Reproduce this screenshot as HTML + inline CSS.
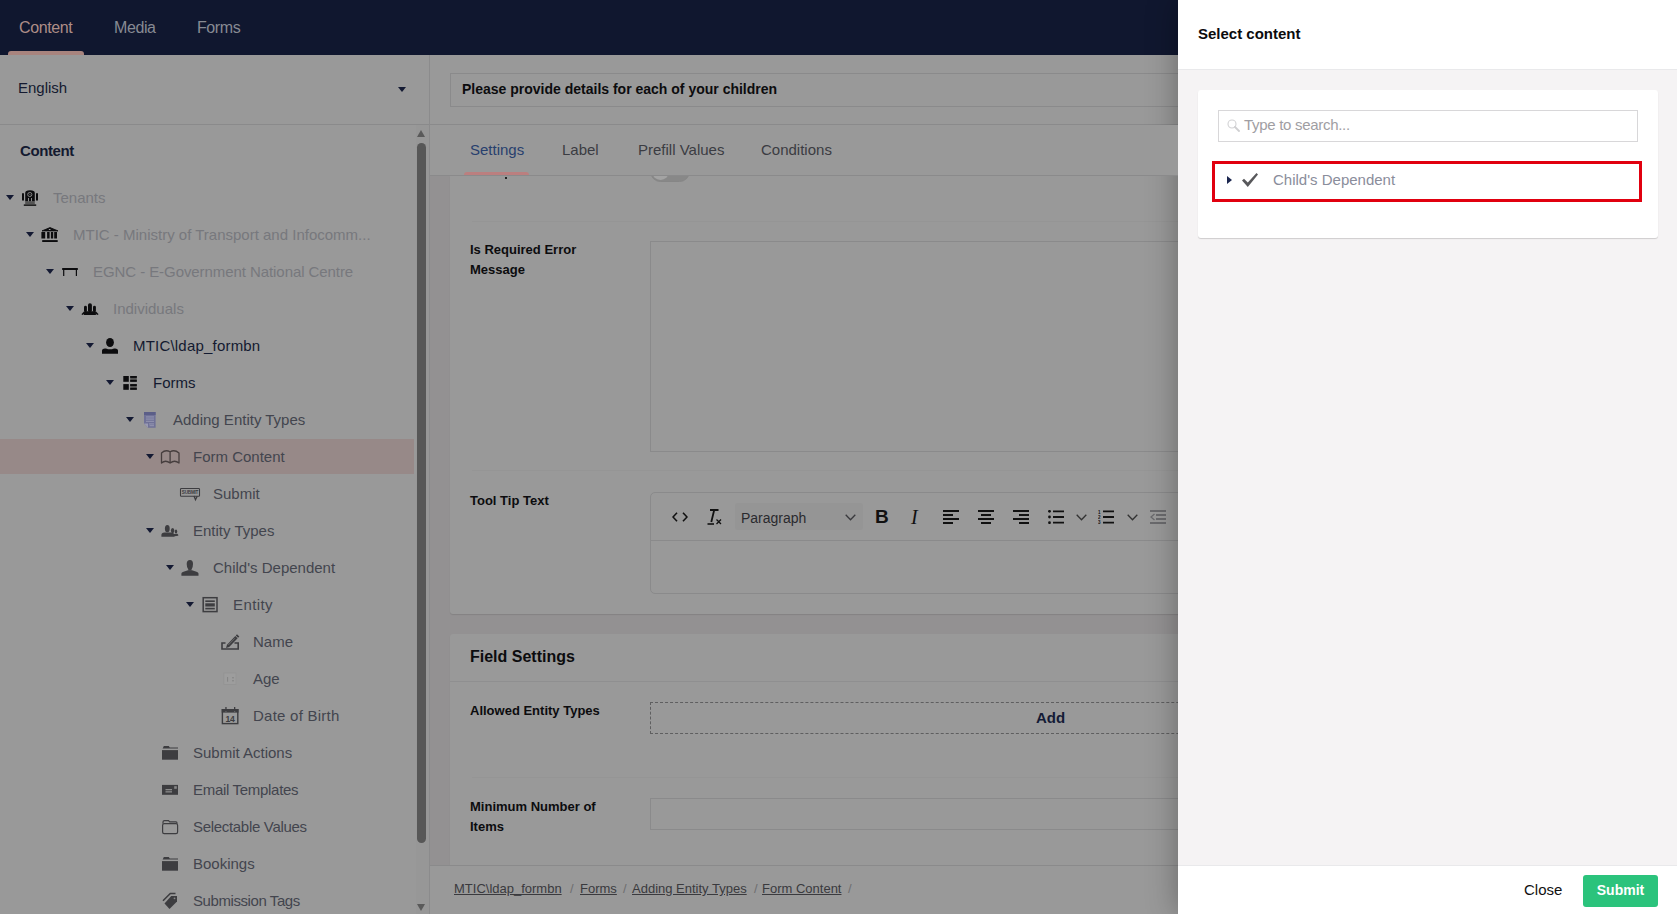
<!DOCTYPE html>
<html><head><meta charset="utf-8">
<style>
*{box-sizing:border-box;margin:0;padding:0}
html,body{width:1677px;height:914px;overflow:hidden;background:#939192;font-family:"Liberation Sans",sans-serif;}
.abs{position:absolute}
#hdr{left:0;top:0;width:1677px;height:55px;background:#10172f}
.sec{position:absolute;top:19px;font-size:16px;letter-spacing:-0.4px;color:#878a93;line-height:18px}
#left{left:0;top:55px;width:430px;height:859px;background:#999999;border-right:1px solid #8b8b8c}
.tt{position:absolute;font-size:15px;line-height:18px;white-space:nowrap}
.car{position:absolute;width:0;height:0;border-left:4px solid transparent;border-right:4px solid transparent;border-top:5px solid #141a33}
.gray{color:#77787d}
.dark{color:#131a30}
.mid{color:#43454e}
#main{left:430px;top:55px;width:748px;height:859px;background:#939192;overflow:hidden}
.lbl{position:absolute;font-size:13px;font-weight:bold;color:#0c0c0e;line-height:20px;white-space:nowrap}
.box{position:absolute;background:#999999;border-radius:3px;box-shadow:0 1px 1px rgba(0,0,0,0.1)}
.sep{position:absolute;height:1px;background:#959595}
.inp{position:absolute;border:1px solid #8a8a8b}
.tab{position:absolute;z-index:3;top:86px;font-size:15px;line-height:18px;color:#3b3c42}
.bc{position:absolute;top:826px;font-size:13px;line-height:16px;color:#3a3a3e;text-decoration:underline;white-space:nowrap}
.bcs{position:absolute;top:826px;font-size:13px;line-height:16px;color:#6e6e70}
#panel{left:1178px;top:0;width:499px;height:914px;background:#f5f3f4;box-shadow:0 0 30px rgba(0,0,0,0.32)}

</style></head>
<body>
<div id="hdr" class="abs">
  <div class="sec" style="left:19px;color:#ad8d87">Content</div>
  <div class="abs" style="left:8px;top:51px;width:76px;height:4px;background:#a8847e;border-radius:3px 3px 0 0"></div>
  <div class="sec" style="left:114px">Media</div>
  <div class="sec" style="left:197px">Forms</div>
</div>

<div id="left" class="abs">
  <div class="abs" style="left:0;top:0;width:429px;height:70px;border-bottom:1px solid #8a8a8b"></div>
  <div class="abs" style="left:18px;top:24px;font-size:15px;line-height:18px;color:#141a30">English</div>
  <div class="car" style="left:398px;top:32px"></div>
  <div class="abs" style="left:20px;top:87px;font-size:15px;letter-spacing:-0.4px;font-weight:bold;line-height:18px;color:#141a30">Content</div>
<div class="car" style="left:6px;top:140.0px"></div>
<svg class="abs" style="left:22px;top:134px;width:16px;height:18px;color:#0c0c0e;overflow:visible" viewBox="0 0 16 18"><rect x="0" y="4" width="2" height="7.7" rx="1" fill="currentColor"/><rect x="14" y="4" width="2" height="7.7" rx="1" fill="currentColor"/>
<path d="M3.2 12.5 V4 Q3.2 1.2 8 1.2 Q12.8 1.2 12.8 4 V12.5 Z" fill="currentColor"/>
<circle cx="7.8" cy="5.5" r="2.1" fill="none" stroke="#aaa" stroke-width="0.7"/><path d="M7 4.6 L8.8 6.4" stroke="#aaa" stroke-width=".6"/>
<rect x="6.2" y="9" width="0.8" height="3.5" fill="#aaa"/><rect x="9.2" y="9" width="0.8" height="3.5" fill="#aaa"/>
<rect x="3.2" y="12.5" width="9.6" height="2.7" fill="#555"/><rect x="1.8" y="15.3" width="12.4" height="1.7" fill="#222"/></svg>
<div class="tt gray" style="left:53px;top:133.5px">Tenants</div>
<div class="car" style="left:26px;top:177.0px"></div>
<svg class="abs" style="left:42px;top:171px;width:16px;height:18px;color:#0c0c0e;overflow:visible" viewBox="0 0 16 18"><path d="M0 4.9 L8 1.6 L16 4.9 Z" fill="currentColor" stroke="currentColor" stroke-width="0.9" stroke-linejoin="round"/><ellipse cx="7.7" cy="3.6" rx="1" ry="0.5" fill="#aaa"/>
<rect x="-0.6" y="6" width="3.8" height="6.5" fill="currentColor"/><rect x="5.1" y="6" width="2.5" height="6.5" fill="currentColor"/><rect x="8.9" y="6" width="2.3" height="6.5" fill="currentColor"/><rect x="12.2" y="6" width="2.8" height="6.5" fill="currentColor"/>
<rect x="0.2" y="14.1" width="15.5" height="1.9" fill="currentColor"/></svg>
<div class="tt gray" style="left:73px;top:170.5px">MTIC - Ministry of Transport and Infocomm...</div>
<div class="car" style="left:46px;top:214.0px"></div>
<svg class="abs" style="left:62px;top:208px;width:16px;height:18px;color:#0c0c0e;overflow:visible" viewBox="0 0 16 18"><rect x="0" y="5" width="16" height="2" rx="0.8" fill="currentColor"/><rect x="1.1" y="6.5" width="1.2" height="6.5" fill="currentColor"/><rect x="13.8" y="6.5" width="1.2" height="6.5" fill="currentColor"/></svg>
<div class="tt gray" style="left:93px;top:207.5px;letter-spacing:-0.07px">EGNC - E-Government National Centre</div>
<div class="car" style="left:66px;top:251.0px"></div>
<svg class="abs" style="left:82px;top:245px;width:16px;height:18px;color:#0c0c0e;overflow:visible" viewBox="0 0 16 18"><rect x="6" y="3.2" width="3.9" height="9" rx="1.9" fill="currentColor"/><rect x="2" y="5.7" width="2.9" height="6.5" rx="1.45" fill="currentColor"/><rect x="11" y="5.7" width="2.9" height="6.5" rx="1.45" fill="currentColor"/>
<path d="M2 15 V12.5 Q2 11.2 4.5 11.2 H11.5 Q13.9 11.2 13.9 12.5 V15 Z" fill="currentColor"/>
<path d="M-0.6 14.2 L2.2 11.3 L3 12.8 L0.9 15 Z" fill="currentColor"/><path d="M16.6 14.2 L13.8 11.3 L13 12.8 L15.1 15 Z" fill="currentColor"/></svg>
<div class="tt gray" style="left:113px;top:244.5px">Individuals</div>
<div class="car" style="left:86px;top:288.0px"></div>
<svg class="abs" style="left:102px;top:282px;width:16px;height:18px;color:#0c0c0e;overflow:visible" viewBox="0 0 16 18"><ellipse cx="8" cy="5.5" rx="3.9" ry="4.5" fill="currentColor"/><path d="M0 16.7 V13.8 Q0 11.8 3 11.6 Q5 11.5 6 12.2 H10 Q11 11.5 13 11.6 Q16 11.8 16 13.8 V16.7 Z" fill="currentColor"/></svg>
<div class="tt dark" style="left:133px;top:281.5px;letter-spacing:0.2px">MTIC\ldap_formbn</div>
<div class="car" style="left:106px;top:325.0px"></div>
<svg class="abs" style="left:122px;top:319px;width:16px;height:18px;color:#0c0c0e;overflow:visible" viewBox="0 0 16 18"><rect x="1.3" y="2" width="5.5" height="5.8" fill="currentColor"/><rect x="1.3" y="10.1" width="5.5" height="5.7" fill="currentColor"/>
<rect x="8.2" y="2" width="6.6" height="5.8" fill="#555"/><rect x="8.2" y="2" width="6.6" height="1.9" fill="currentColor"/><rect x="8.2" y="5.9" width="6.6" height="1.9" fill="currentColor"/>
<rect x="8.2" y="10.1" width="6.6" height="5.7" fill="#555"/><rect x="8.2" y="10.1" width="6.6" height="1.9" fill="currentColor"/><rect x="8.2" y="13.9" width="6.6" height="1.9" fill="currentColor"/></svg>
<div class="tt dark" style="left:153px;top:318.5px">Forms</div>
<div class="car" style="left:126px;top:362.0px"></div>
<svg class="abs" style="left:142px;top:356px;width:16px;height:18px;color:#6a6d95;overflow:visible" viewBox="0 0 16 18"><path d="M2 1 H13.6 V16.7 H6 L2 12.5 Z" fill="#6f7197"/><rect x="2" y="1" width="11.6" height="3" fill="#5b5e88"/><rect x="4" y="5.5" width="8" height="0.9" fill="#9c9db6"/><rect x="4" y="7.6" width="8" height="0.9" fill="#9c9db6"/><rect x="4" y="9.8" width="8" height="0.9" fill="#9c9db6"/><rect x="7" y="12.5" width="5" height="0.9" fill="#9c9db6"/><rect x="7.5" y="14.3" width="4.5" height="0.9" fill="#9c9db6"/><path d="M2 12.5 L6 16.7 V12.5 Z" fill="#9a9bb3"/></svg>
<div class="tt mid" style="left:173px;top:355.5px">Adding Entity Types</div>
<div class="abs" style="left:0;top:384px;width:414px;height:35px;background:#978988"></div>
<div class="car" style="left:146px;top:399.0px"></div>
<svg class="abs" style="left:162px;top:393px;width:16px;height:18px;color:#463e3e;overflow:visible" viewBox="0 0 16 18"><path d="M-0.5 5 Q3.5 1.2 8.1 3.8 Q12.6 1.2 17 5 V15 Q12.6 11.5 8.1 15 Q3.5 11.5 -0.5 15 Z M8.1 3.8 V15" fill="none" stroke="currentColor" stroke-width="1.3" stroke-linejoin="round"/></svg>
<div class="tt mid" style="left:193px;top:392.5px">Form Content</div>
<svg class="abs" style="left:182px;top:430px;width:16px;height:18px;color:#3d3d40;overflow:visible" viewBox="0 0 16 18"><rect x="-1.5" y="3.5" width="19" height="7.8" rx="0.8" fill="none" stroke="currentColor" stroke-width="1.1"/><text x="8" y="9.3" font-size="4.6" text-anchor="middle" font-family="Liberation Sans" font-weight="bold" fill="currentColor" letter-spacing="-0.2">SUBMIT</text><path d="M12 11 L13.5 14.7 L15.2 11.3" fill="none" stroke="currentColor" stroke-width="1.3"/></svg>
<div class="tt mid" style="left:213px;top:429.5px">Submit</div>
<div class="car" style="left:146px;top:473.0px"></div>
<svg class="abs" style="left:162px;top:467px;width:16px;height:18px;color:#3d3d40;overflow:visible" viewBox="0 0 16 18"><ellipse cx="5.3" cy="6.7" rx="2.4" ry="3.6" fill="currentColor"/><ellipse cx="10.6" cy="8.6" rx="1.7" ry="2.6" fill="currentColor"/><ellipse cx="14" cy="9.5" rx="1.2" ry="1.9" fill="currentColor"/>
<path d="M-0.6 14.8 V13 Q-0.6 11 2.5 10.6 H9 Q11.5 10.8 12.3 12 L15.2 11.8 Q16.5 12.5 16.3 13.8 L12.5 14.3 V14.8 Z" fill="currentColor"/></svg>
<div class="tt mid" style="left:193px;top:466.5px">Entity Types</div>
<div class="car" style="left:166px;top:510.0px"></div>
<svg class="abs" style="left:182px;top:504px;width:16px;height:18px;color:#3d3d40;overflow:visible" viewBox="0 0 16 18"><path d="M4.7 5 Q4.7 1 8 1 Q11 1 11 5 Q11 8.5 9.5 10.5 V11.5 H6.3 V10.5 Q4.7 8.5 4.7 5 Z" fill="currentColor"/><path d="M-0.6 16.8 V14.5 Q-0.6 13.5 1.5 12.8 L6 11.3 H10 L14.5 12.8 Q16.5 13.5 16.5 14.5 V16.8 Z" fill="currentColor"/></svg>
<div class="tt mid" style="left:213px;top:503.5px">Child's Dependent</div>
<div class="car" style="left:186px;top:547.0px"></div>
<svg class="abs" style="left:202px;top:541px;width:16px;height:18px;color:#3d3d40;overflow:visible" viewBox="0 0 16 18"><rect x="1.2" y="1.7" width="13.8" height="13.9" fill="none" stroke="currentColor" stroke-width="1.5"/><rect x="3.3" y="4.4" width="9.5" height="1.6" fill="currentColor"/><rect x="3.3" y="7.3" width="9.5" height="3.2" fill="currentColor"/><rect x="3.3" y="11.8" width="9.5" height="1.6" fill="currentColor"/></svg>
<div class="tt mid" style="left:233px;top:540.5px;letter-spacing:0.4px">Entity</div>
<svg class="abs" style="left:222px;top:578px;width:16px;height:18px;color:#3d3d40;overflow:visible" viewBox="0 0 16 18"><path d="M3.5 10 H0 V16 H16.2 V10 H12.5" fill="none" stroke="currentColor" stroke-width="1.6"/><path d="M4 15 L5 11.8 L13.3 3 L15.6 5.2 L7.2 14 Z" fill="currentColor"/><path d="M13.8 2.5 L15 1.3 L17.3 3.5 L16.1 4.7 Z" fill="currentColor"/><path d="M6.3 12 L12.8 5.3" stroke="#888" stroke-width=".6"/></svg>
<div class="tt mid" style="left:253px;top:577.5px">Name</div>
<svg class="abs" style="left:222px;top:615px;width:16px;height:18px;color:#3d3d40;overflow:visible" viewBox="0 0 16 18"><rect x="1.8" y="3" width="12.2" height="11.4" fill="#9d9d9d" stroke="#939393" stroke-width="0.8"/><rect x="5.3" y="7" width="0.8" height="4.7" fill="#7c7c7c"/><circle cx="11" cy="7.8" r="0.8" fill="#808080"/><circle cx="11" cy="10.8" r="0.8" fill="#808080"/></svg>
<div class="tt mid" style="left:253px;top:614.5px">Age</div>
<svg class="abs" style="left:222px;top:652px;width:16px;height:18px;color:#3d3d40;overflow:visible" viewBox="0 0 16 18"><rect x="0.4" y="2.7" width="15.4" height="13.9" fill="none" stroke="currentColor" stroke-width="1.4"/><rect x="-0.3" y="2" width="16.8" height="3.6" fill="currentColor"/><rect x="3.3" y="0" width="1.3" height="4.5" fill="currentColor"/><rect x="12" y="0" width="1.3" height="4.5" fill="currentColor"/><path d="M3.3 4.5 H4.6 M12 4.5 H13.3" stroke="#888" stroke-width=".5"/><text x="8" y="15.2" font-size="8.6" text-anchor="middle" font-family="Liberation Sans" font-weight="bold" fill="currentColor" letter-spacing="-0.3">14</text></svg>
<div class="tt mid" style="left:253px;top:651.5px;letter-spacing:0.25px">Date of Birth</div>
<svg class="abs" style="left:162px;top:689px;width:16px;height:18px;color:#3d3d40;overflow:visible" viewBox="0 0 16 18"><path d="M0.5 5 L1.8 2 H6.8 L7.8 3.5 H16 V4.5 H0.5 Z" fill="currentColor"/><rect x="0" y="6.1" width="16" height="9.6" fill="currentColor"/></svg>
<div class="tt mid" style="left:193px;top:688.5px">Submit Actions</div>
<svg class="abs" style="left:162px;top:726px;width:16px;height:18px;color:#3d3d40;overflow:visible" viewBox="0 0 16 18"><rect x="0" y="3.9" width="16" height="9.9" fill="currentColor"/><rect x="3.5" y="8" width="6.5" height="1.3" fill="#999" opacity=".85"/><rect x="3.5" y="10.2" width="6.5" height="1.3" fill="#999" opacity=".85"/><rect x="12.2" y="5.2" width="2.6" height="2.6" fill="#888"/></svg>
<div class="tt mid" style="left:193px;top:725.5px;letter-spacing:-0.3px">Email Templates</div>
<svg class="abs" style="left:162px;top:763px;width:16px;height:18px;color:#3d3d40;overflow:visible" viewBox="0 0 16 18"><path d="M1 5.5 V4 Q1 2.6 2.5 2.6 H6.5 L7.7 3.8 H14 Q15 3.8 15 5 V5.5" fill="none" stroke="currentColor" stroke-width="1.2"/><rect x="0.6" y="5.6" width="15" height="10" rx="1.6" fill="none" stroke="currentColor" stroke-width="1.2"/></svg>
<div class="tt mid" style="left:193px;top:762.5px;letter-spacing:-0.31px">Selectable Values</div>
<svg class="abs" style="left:162px;top:800px;width:16px;height:18px;color:#3d3d40;overflow:visible" viewBox="0 0 16 18"><path d="M0.5 5 L1.8 2 H6.8 L7.8 3.5 H16 V4.5 H0.5 Z" fill="currentColor"/><rect x="0" y="6.1" width="16" height="9.6" fill="currentColor"/></svg>
<div class="tt mid" style="left:193px;top:799.5px">Bookings</div>
<svg class="abs" style="left:162px;top:837px;width:16px;height:18px;color:#3d3d40;overflow:visible" viewBox="0 0 16 18"><path d="M1 8.7 L8.3 1.5 H13.5" fill="none" stroke="currentColor" stroke-width="1.6"/><path d="M2.5 11.6 L9.2 4 H15 V9.5 L7.5 17 Z" fill="currentColor"/><circle cx="12.5" cy="6.3" r="0.9" fill="#888"/></svg>
<div class="tt mid" style="left:193px;top:836.5px;letter-spacing:-0.42px">Submission Tags</div>
  <div class="abs" style="left:416px;top:70px;width:13px;height:789px;background:#979797"></div>
  <div class="abs" style="left:417px;top:75px;width:0;height:0;border-left:4.5px solid transparent;border-right:4.5px solid transparent;border-bottom:7px solid #5a5a5a"></div>
  <div class="abs" style="left:417px;top:88px;width:9px;height:700px;background:#575757;border-radius:5px"></div>
  <div class="abs" style="left:417px;top:849px;width:0;height:0;border-left:4.5px solid transparent;border-right:4.5px solid transparent;border-top:7px solid #5a5a5a"></div>
</div>

<div id="main" class="abs">
  <!-- editor header -->
  <div class="abs" style="left:0;top:0;width:748px;height:70px;background:#999;border-bottom:1px solid #8a8a8b"></div>
  <div class="inp" style="left:20px;top:18px;width:760px;height:34px"></div>
  <div class="abs" style="left:32px;top:25px;font-size:14px;font-weight:bold;line-height:18px;color:#0c0c0e">Please provide details for each of your children</div>
  <!-- tabs -->
  <div class="abs" style="left:0;top:70px;width:748px;height:51px;background:#999;border-bottom:1px solid #8a8a8b;z-index:2"></div>
  <div class="tab" style="left:40px;color:#28406e">Settings</div>
  <div class="tab" style="left:132px">Label</div>
  <div class="tab" style="left:208px">Prefill Values</div>
  <div class="tab" style="left:331px">Conditions</div>
  <div class="abs" style="left:34px;top:117px;width:65px;height:3px;background:#bb7f7f;border-radius:3px 3px 0 0;z-index:3"></div>
  <!-- box 1 -->
  <div class="box" style="left:20px;top:121px;width:760px;height:438px;border-radius:0 0 3px 3px"></div>
  <div class="abs" style="left:220px;top:106px;width:40px;height:21px;border-radius:11px;background:#888;border:1px solid #868686"></div><div class="abs" style="left:222px;top:108px;width:17px;height:17px;border-radius:50%;background:#a3a3a3"></div><div class="abs" style="left:75px;top:122px;width:2px;height:2px;background:#222"></div>
  <div class="sep" style="left:42px;top:166px;width:740px"></div>
  <div class="lbl" style="left:40px;top:185px">Is Required Error<br>Message</div>
  <div class="inp" style="left:220px;top:186px;width:600px;height:211px"></div>
  <div class="sep" style="left:42px;top:415px;width:740px"></div>
  <div class="lbl" style="left:40px;top:436px">Tool Tip Text</div>
  <div class="inp" style="left:220px;top:437px;width:600px;height:102px;border-radius:5px"></div>
  <div class="abs" style="left:221px;top:485px;width:600px;height:1px;background:#8a8a8b"></div>
  

  <svg class="abs" style="left:242px;top:457px;width:16px;height:10px" viewBox="0 0 16 10"><path d="M5 0.8 L1 5 L5 9.2 M11 0.8 L15 5 L11 9.2" fill="none" stroke="#111" stroke-width="1.6"/></svg>
  <svg class="abs" style="left:277px;top:454px;width:16px;height:16px" viewBox="0 0 16 16"><path d="M3 1 H11.5 M7.2 1 L4.3 13" fill="none" stroke="#111" stroke-width="1.8"/><path d="M0.5 15 H7" stroke="#111" stroke-width="1.6"/><path d="M9.5 10.5 L14 15 M14 10.5 L9.5 15" stroke="#111" stroke-width="1.3"/></svg>
  <div class="abs" style="left:305px;top:448px;width:128px;height:27px;background:#959595;border-radius:3px"></div>
  <div class="abs" style="left:311px;top:455px;font-size:14px;line-height:16px;color:#2a2a2e">Paragraph</div>
  <svg class="abs" style="left:415px;top:459px;width:11px;height:7px" viewBox="0 0 11 7"><path d="M0.7 0.7 L5.5 5.8 L10.3 0.7" fill="none" stroke="#3a3a3e" stroke-width="1.3"/></svg>
  <div class="abs" style="left:445px;top:452px;font-size:19px;font-weight:bold;line-height:20px;color:#111">B</div>
  <div class="abs" style="left:481px;top:452px;font-size:20px;font-style:italic;font-family:'Liberation Serif',serif;line-height:20px;color:#111">I</div>
  <svg class="abs" style="left:513px;top:455px;width:16px;height:14px" viewBox="0 0 16 14"><path d="M0 1 H16 M0 5 H10 M0 9 H16 M0 13 H10" stroke="#111" stroke-width="1.8"/></svg>
  <svg class="abs" style="left:548px;top:455px;width:16px;height:14px" viewBox="0 0 16 14"><path d="M0 1 H16 M3 5 H13 M0 9 H16 M3 13 H13" stroke="#111" stroke-width="1.8"/></svg>
  <svg class="abs" style="left:583px;top:455px;width:16px;height:14px" viewBox="0 0 16 14"><path d="M0 1 H16 M6 5 H16 M0 9 H16 M6 13 H16" stroke="#111" stroke-width="1.8"/></svg>
  <svg class="abs" style="left:618px;top:455px;width:16px;height:14px" viewBox="0 0 16 14"><circle cx="1.5" cy="1.3" r="1.4" fill="#111"/><circle cx="1.5" cy="7" r="1.4" fill="#111"/><circle cx="1.5" cy="12.7" r="1.4" fill="#111"/><path d="M5 1.3 H16 M5 7 H16 M5 12.7 H16" stroke="#111" stroke-width="1.8"/></svg>
  <svg class="abs" style="left:646px;top:459px;width:11px;height:7px" viewBox="0 0 11 7"><path d="M0.7 0.7 L5.5 5.8 L10.3 0.7" fill="none" stroke="#333" stroke-width="1.3"/></svg>
  <svg class="abs" style="left:668px;top:455px;width:16px;height:14px" viewBox="0 0 16 14"><text x="0" y="4" font-size="4.5" font-family="Liberation Sans" font-weight="bold" fill="#111">1</text><text x="0" y="9" font-size="4.5" font-family="Liberation Sans" font-weight="bold" fill="#111">2</text><text x="0" y="14" font-size="4.5" font-family="Liberation Sans" font-weight="bold" fill="#111">3</text><path d="M5 1.3 H16 M5 7 H16 M5 12.7 H16" stroke="#111" stroke-width="1.8"/></svg>
  <svg class="abs" style="left:697px;top:459px;width:11px;height:7px" viewBox="0 0 11 7"><path d="M0.7 0.7 L5.5 5.8 L10.3 0.7" fill="none" stroke="#333" stroke-width="1.3"/></svg>
  <svg class="abs" style="left:720px;top:455px;width:16px;height:14px" viewBox="0 0 16 14"><path d="M0 1 H16 M6 5 H16 M6 9 H16 M0 13 H16" stroke="#6a6a6d" stroke-width="1.8"/><path d="M4.5 4 L1 7 L4.5 10" fill="none" stroke="#6a6a6d" stroke-width="1.3"/></svg>
  <!-- box 2 -->
  <div class="box" style="left:20px;top:579px;width:760px;height:290px"></div>
  <div class="abs" style="left:20px;top:626px;width:760px;height:1px;background:#8f8f90"></div>
  <div class="abs" style="left:40px;top:592px;font-size:16px;font-weight:bold;line-height:20px;color:#0c0c0e">Field Settings</div>
  <div class="lbl" style="left:40px;top:646px">Allowed Entity Types</div>
  <div class="abs" style="left:220px;top:647px;width:800px;height:32px;border:1px dashed #5f5f60"></div>
  <div class="abs" style="left:606px;top:653px;font-size:15px;font-weight:bold;line-height:20px;color:#141b36">Add</div>
  <div class="sep" style="left:42px;top:722px;width:740px"></div>
  <div class="lbl" style="left:40px;top:742px">Minimum Number of<br>Items</div>
  <div class="inp" style="left:220px;top:743px;width:600px;height:32px"></div>
  <!-- footer -->
  <div class="abs" style="left:0;top:810px;width:748px;height:49px;background:#999;border-top:1px solid #8a8a8b"></div>
  <div class="bc" style="left:24px">MTIC\ldap_formbn</div>
  <div class="bcs" style="left:140px">/</div>
  <div class="bc" style="left:150px">Forms</div>
  <div class="bcs" style="left:193px">/</div>
  <div class="bc" style="left:202px">Adding Entity Types</div>
  <div class="bcs" style="left:324px">/</div>
  <div class="bc" style="left:332px">Form Content</div>
  <div class="bcs" style="left:418px">/</div>
</div>

<div id="panel" class="abs">
  <div class="abs" style="left:0;top:0;width:499px;height:70px;background:#fff;border-bottom:1px solid #e9e9eb"></div>
  <div class="abs" style="left:20px;top:25px;font-size:15px;font-weight:bold;line-height:18px;color:#0b0b0d">Select content</div>
  <div class="abs" style="left:20px;top:90px;width:460px;height:148px;background:#fff;border-radius:3px;box-shadow:0 1px 1px rgba(0,0,0,0.16)"></div>
  <div class="abs" style="left:40px;top:110px;width:420px;height:32px;border:1px solid #d8d7d9"></div>
  <svg class="abs" style="left:49px;top:119px;width:13px;height:13px" viewBox="0 0 13 13"><circle cx="5" cy="5" r="4" fill="none" stroke="#d2d2d4" stroke-width="1.1"/><path d="M8 8 L12 12" stroke="#cfcfd1" stroke-width="1.8" stroke-linecap="round"/></svg>
  <div class="abs" style="left:66px;top:116px;font-size:15px;letter-spacing:-0.3px;line-height:18px;color:#9f9ea3">Type to search...</div>
  <div class="abs" style="left:34px;top:161px;width:430px;height:41px;border:3px solid #e1000f"></div>
  <div class="abs" style="left:49px;top:176px;width:0;height:0;border-top:4px solid transparent;border-bottom:4px solid transparent;border-left:5px solid #1b264f"></div>
  <svg class="abs" style="left:64px;top:173px;width:16px;height:14px;color:#58585b" viewBox="0 0 16 14"><path d="M0 7.5 L2 5.8 L5.8 9.5 L14.5 0 L16 1.5 L5.8 14 Z" fill="currentColor"/></svg>
  <div class="abs" style="left:95px;top:171px;font-size:15px;line-height:18px;color:#8a8d9b">Child's Dependent</div>
  <div class="abs" style="left:0;top:865px;width:499px;height:49px;background:#fff;border-top:1px solid #e9e9eb"></div>
  <div class="abs" style="left:346px;top:881px;font-size:15px;line-height:18px;color:#111">Close</div>
  <div class="abs" style="left:405px;top:875px;width:75px;height:32px;background:#2bc37c;border-radius:3px"></div>
  <div class="abs" style="left:405px;top:881px;width:75px;text-align:center;font-size:14px;font-weight:bold;line-height:18px;color:#fff">Submit</div>
</div>

</body></html>
